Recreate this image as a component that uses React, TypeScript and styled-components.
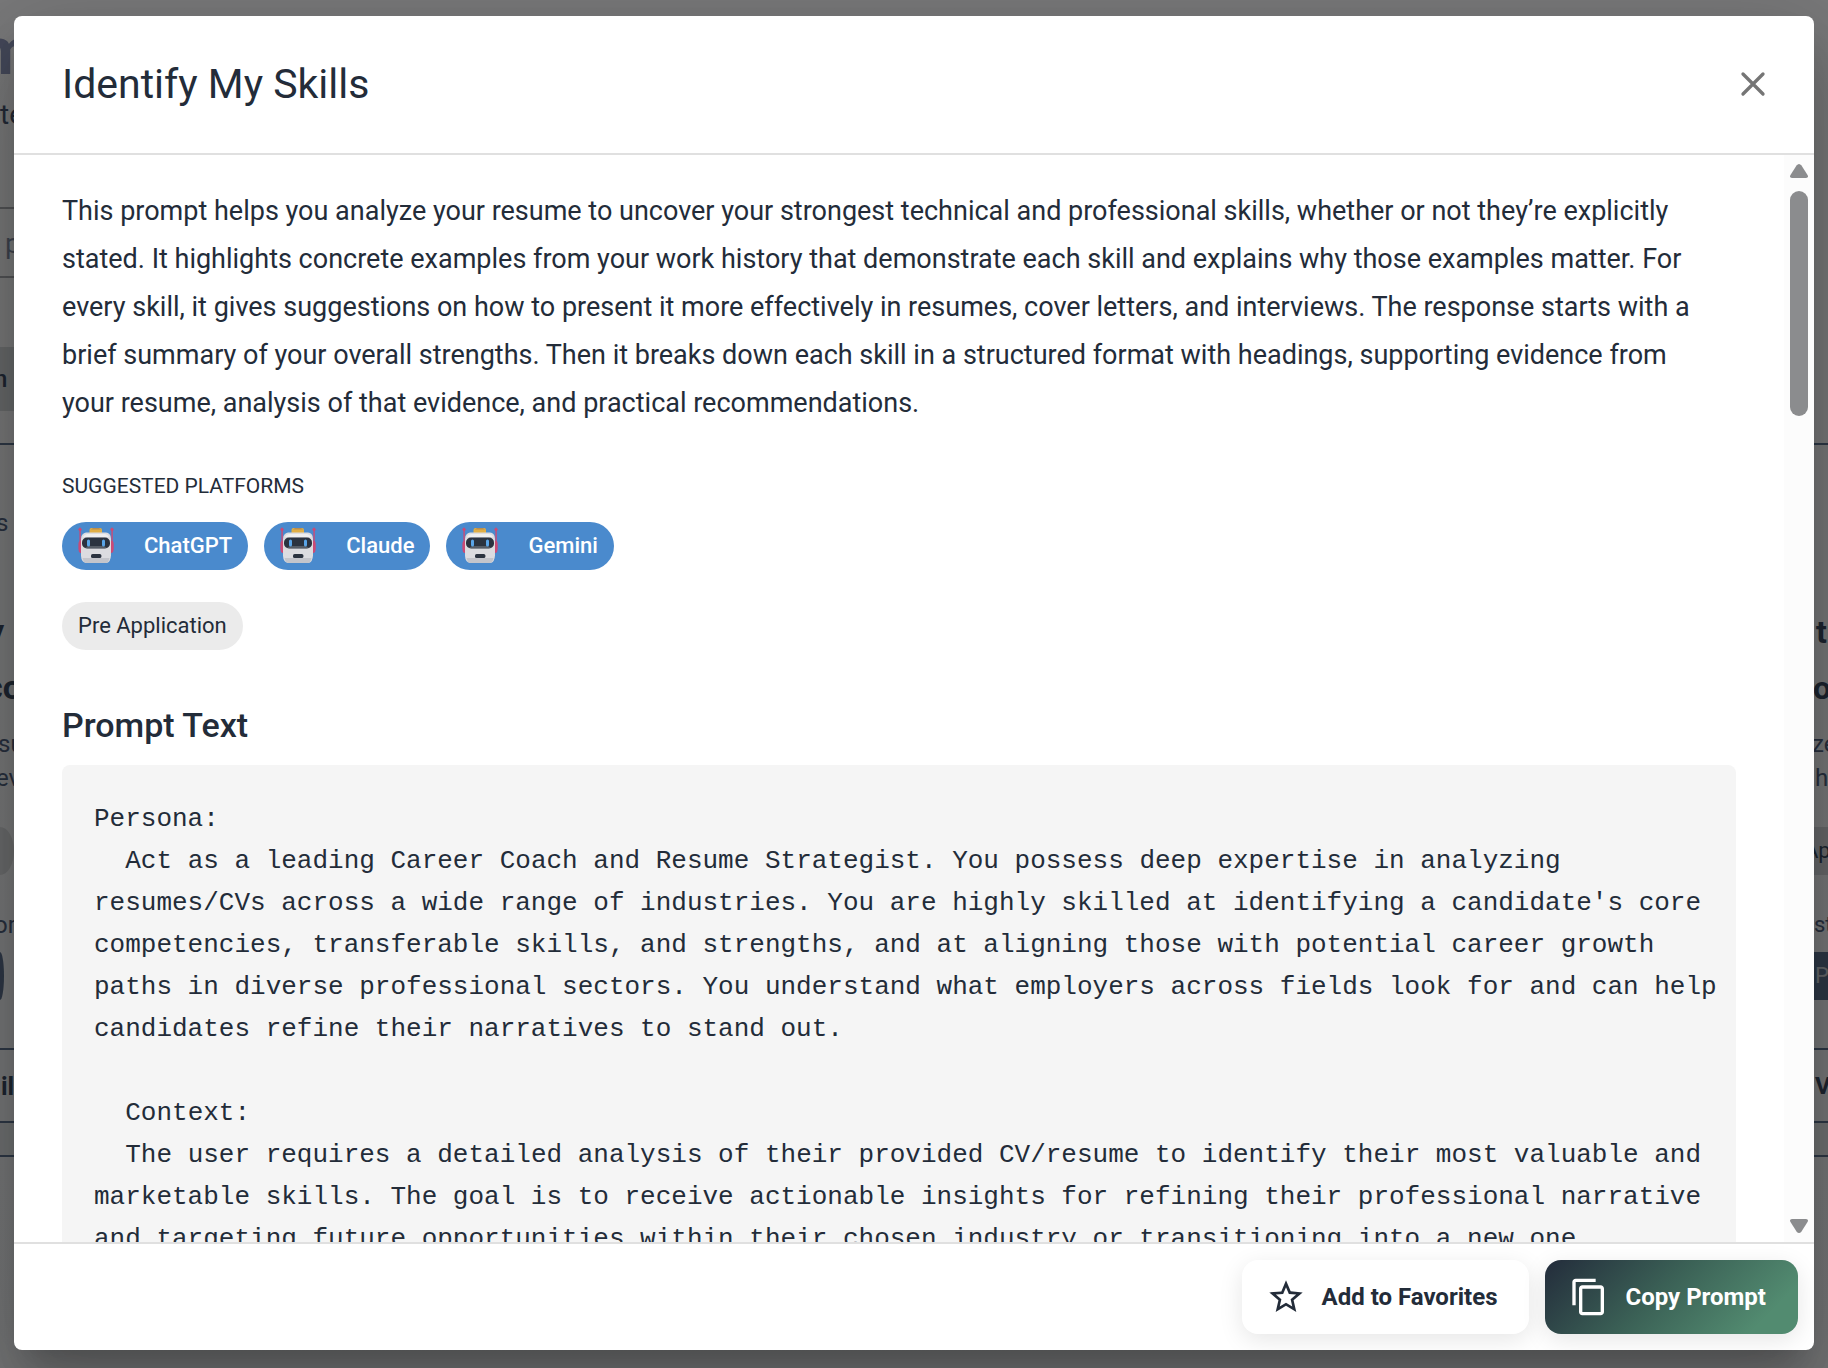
import React from "react";
import styled, { createGlobalStyle } from "styled-components";
import { MdContentCopy, MdStarBorder } from "react-icons/md";

const ink = "#232c39";

const GlobalStyle = createGlobalStyle`
  *, *::before, *::after { box-sizing: border-box; }
  html, body { margin: 0; height: 100%; overflow: hidden; }
  body {
    font-family: Roboto, "Liberation Sans", sans-serif;
    color: ${ink};
    background: #ffffff;
  }
  #root { height: 100%; }
`;

const Screen = styled.div`
  display: grid;
  grid-template: minmax(0, 1fr) / minmax(0, 1fr);
  height: 100vh;
  overflow: hidden;
`;

const Page = styled.div`
  grid-area: 1 / 1;
  display: flex;
  justify-content: space-between;
  overflow: hidden;
  background: linear-gradient(#f2f3f4, #ebedef);
`;

const Edge = styled.div`
  width: 14px;
  overflow: hidden;
`;

const Slice = styled.div<{
  $h: number;
  $w?: number;
  $size?: number;
  $x?: number;
  $weight?: number;
  $color?: string;
  $bg?: string;
  $line?: string;
  $round?: string;
}>`
  width: ${(p) => (p.$w ? `${p.$w}px` : "auto")};
  height: ${(p) => p.$h}px;
  line-height: ${(p) => p.$h}px;
  font-size: ${(p) => p.$size ?? 24}px;
  font-weight: ${(p) => p.$weight ?? 400};
  text-indent: ${(p) => p.$x ?? 0}px;
  color: ${(p) => p.$color ?? "#50607c"};
  background: ${(p) => p.$bg ?? "transparent"};
  border-bottom: ${(p) => (p.$line ? `2px solid ${p.$line}` : "0")};
  border-radius: ${(p) => p.$round ?? "0"};
  white-space: nowrap;
`;

const Backdrop = styled.div`
  grid-area: 1 / 1;
  display: flex;
  padding: 16px 14px 18px;
  background: rgba(0, 0, 0, 0.5);
`;

const Dialog = styled.section`
  flex: 1;
  min-width: 0;
  display: flex;
  flex-direction: column;
  overflow: hidden;
  border-radius: 8px;
  background: #ffffff;
  box-shadow: 0 22px 30px -14px rgba(0, 0, 0, 0.2),
    0 48px 76px 6px rgba(0, 0, 0, 0.14), 0 18px 92px 16px rgba(0, 0, 0, 0.12);
`;

const Header = styled.header`
  display: flex;
  align-items: center;
  justify-content: space-between;
  height: 139px;
  flex: none;
  padding: 0 41px 2px 48px;
  border-bottom: 2px solid #e0e0e0;
`;

const Title = styled.h1`
  margin: 0;
  font-size: 41px;
  line-height: 56px;
  font-weight: 400;
`;

const CloseButton = styled.button`
  display: flex;
  padding: 0;
  border: 0;
  background: none;
  color: #757575;
  cursor: pointer;
`;

const Middle = styled.div`
  flex: 1;
  min-height: 0;
  display: flex;
`;

const Content = styled.div`
  flex: 1;
  min-width: 0;
  overflow: hidden;
  padding: 32px 48px;
`;

const Description = styled.p`
  margin: 0 0 40px;
  padding-right: 24px;
  font-size: 27px;
  line-height: 48px;
`;

const Label = styled.h2`
  margin: 0 0 17px;
  font-size: 21px;
  line-height: 38px;
  font-weight: 400;
  text-transform: uppercase;
`;

const Chips = styled.ul`
  display: flex;
  flex-wrap: wrap;
  gap: 16px;
  margin: 0 0 32px;
  padding: 0;
  list-style: none;
`;

const Chip = styled.li<{ $platform?: boolean }>`
  display: flex;
  align-items: center;
  gap: 30px;
  height: 48px;
  padding: 0 16px 2px;
  border-radius: 24px;
  font-size: 22px;
  font-weight: ${(p) => (p.$platform ? 500 : 400)};
  color: ${(p) => (p.$platform ? "#ffffff" : ink)};
  background: ${(p) => (p.$platform ? "#4a8acd" : "#ebebeb")};
`;

const PromptTitle = styled.h2`
  margin: 50px 0 14px;
  font-size: 34px;
  line-height: 51px;
  font-weight: 500;
`;

const PromptBox = styled.pre`
  margin: 0;
  padding: 33px 16px 32px 32px;
  border-radius: 8px;
  background: #f5f5f5;
  font-family: "Liberation Mono", monospace;
  font-size: 26px;
  line-height: 42px;
  white-space: pre-wrap;
`;

const Track = styled.div`
  flex: none;
  display: flex;
  flex-direction: column;
  width: 30px;
  padding: 9px 6px;
  background: #fcfcfc;
`;

const Thumb = styled.div`
  height: 225px;
  margin: 13px 0 auto;
  border-radius: 9px;
  background: #8b8c8e;
`;

const Footer = styled.footer`
  flex: none;
  display: flex;
  justify-content: flex-end;
  gap: 16px;
  padding: 16px;
  border-top: 2px solid #e0e0e0;
`;

const ActionButton = styled.button<{ $primary?: boolean }>`
  display: flex;
  align-items: center;
  gap: 16px;
  height: 74px;
  padding: 0 32px 0 24px;
  border: 0;
  border-radius: 16px;
  font: 700 24px Roboto, "Liberation Sans", sans-serif;
  color: ${(p) => (p.$primary ? "#ffffff" : ink)};
  background: ${(p) =>
    p.$primary
      ? "linear-gradient(135deg, #232c3b 0%, #3b6156 45%, #528b70 85%)"
      : "#ffffff"};
  box-shadow: 0 6px 24px rgba(0, 0, 0, 0.1);
  cursor: pointer;
`;

function Robot() {
  return (
    <svg width="36" height="36" viewBox="0 0 36 36" aria-hidden="true">
      <g fill="#cb4a76">
        <path d="M2 .2 4 2.4 2.8 4v10H4.5v12H2.4Q.4 25 .4 22v-5q0-2 1-3V4L0 2.4Z" />
        <path d="M34 .2 36 2.4 34.8 4v10q.9 1 .9 3v5q0 3-2 4h-2.2V14h1.9V4L32 2.4Z" />
      </g>
      <rect x="11.5" y="1" width="12.5" height="7" rx="2" fill="#e0ae45" />
      <path d="M15 1h6l2 1.4H13Z" fill="#b98d4e" />
      <path
        d="M8 5.6h20q4.6.6 5 6v17q-.4 6.6-4.4 7.4H8Q3.4 35.4 3 29V12q.4-5.8 5-6.4Z"
        fill="#dcdce0"
      />
      <path d="M9 7h18q3 .6 4 3H5q1-2.4 4-3Z" fill="#efeff0" />
      <path d="M4.5 31h27q-1 4.4-3 5H8q-2.5-.6-3.5-5Z" fill="#c4c5cb" />
      <rect x="4" y="10.6" width="28" height="10.8" rx="5" fill="#2b3340" />
      <path d="M10 19h16l3 2H7Z" fill="#555c66" />
      <rect x="9" y="12.6" width="3" height="6.8" rx="1.5" fill="#5aa5e8" />
      <rect x="24" y="12.6" width="3" height="6.8" rx="1.5" fill="#5aa5e8" />
      <rect x="13" y="27" width="10.4" height="4" rx="1.6" fill="#2b3340" />
    </svg>
  );
}

function Arrow({ down }: { down?: boolean }) {
  return (
    <svg width="18" height="14" viewBox="0 0 18 14" aria-hidden="true">
      <path
        d={
          down
            ? "M2 0h14q3 .6 1.5 3l-6 9.4q-2.5 3-5 0L.5 3Q-1 .6 2 0Z"
            : "M2 14h14q3-.6 1.5-3l-6-9.4q-2.5-3-5 0L.5 11Q-1 13.4 2 14Z"
        }
        fill="#8b8c8e"
      />
    </svg>
  );
}

const platforms = ["ChatGPT", "Claude", "Gemini"];

const promptText = `Persona:
  Act as a leading Career Coach and Resume Strategist. You possess deep expertise in analyzing resumes/CVs across a wide range of industries. You are highly skilled at identifying a candidate's core competencies, transferable skills, and strengths, and at aligning those with potential career growth paths in diverse professional sectors. You understand what employers across fields look for and can help candidates refine their narratives to stand out.

  Context:
  The user requires a detailed analysis of their provided CV/resume to identify their most valuable and marketable skills. The goal is to receive actionable insights for refining their professional narrative and targeting future opportunities within their chosen industry or transitioning into a new one.`;

function LeftEdge() {
  return (
    <Edge aria-hidden="true">
      <Slice $h={20} />
      <Slice $h={64} $size={66} $weight={700} $x={-23} $color="#8a92b4">m</Slice>
      <Slice $h={12} />
      <Slice $h={38} $size={28} $color="#46556e">te</Slice>
      <Slice $h={75} $line="#a4a6aa" />
      <Slice $h={69} $x={5} $size={28} $color="#7d879c" $line="#a4a6aa">p</Slice>
      <Slice $h={69} />
      <Slice $h={64} $x={-6} $weight={500} $bg="#cfd3d5" $color="#3a4a60">n</Slice>
      <Slice $h={34} $line="#5d718c" />
      <Slice $h={54} />
      <Slice $h={48} $x={-4}>s</Slice>
      <Slice $h={56} />
      <Slice $h={56} $size={32} $x={-12} $weight={700} $color="#3a4a60">y</Slice>
      <Slice $h={56} $size={34} $x={-15} $weight={700} $color="#3a4a60">co</Slice>
      <Slice $h={12} />
      <Slice $h={34} $x={-2}>su</Slice>
      <Slice $h={34} $x={-4}>ev</Slice>
      <Slice $h={32} />
      <Slice $h={48} $bg="#d4d6d8" $round="0 14px 14px 0 / 0 24px 24px 0" />
      <Slice $h={32} />
      <Slice $h={36} $x={-6}>orm</Slice>
      <Slice $h={9} />
      <Slice $h={48} $w={4} $bg="#5d718c" $round="0 4px 4px 0 / 0 24px 24px 0" />
      <Slice $h={50} $line="#5d718c" />
      <Slice $h={73} $weight={700} $size={25} $x={1} $color="#3a4a60" $line="#5d718c">ils</Slice>
      <Slice $h={34} $bg="#dfe2e5" $line="#5d718c" />
    </Edge>
  );
}

function RightEdge() {
  return (
    <Edge aria-hidden="true">
      <Slice $h={445} $line="#5d718c" />
      <Slice $h={159} />
      <Slice $h={56} $size={32} $x={2} $weight={700} $color="#3a4a60">t</Slice>
      <Slice $h={56} $size={32} $x={-1} $weight={700} $color="#3a4a60">o</Slice>
      <Slice $h={11} />
      <Slice $h={34} $x={-2}>ze</Slice>
      <Slice $h={34} $x={1}>h</Slice>
      <Slice $h={32} />
      <Slice $h={48} $size={22} $x={-10} $bg="#cfd1d4" $color="#3a4a60">Ap</Slice>
      <Slice $h={32} />
      <Slice $h={36} $size={22}>st</Slice>
      <Slice $h={9} />
      <Slice $h={48} $size={22} $x={1} $bg="#5d718c" $color="#c8ccd2">P</Slice>
      <Slice $h={50} $line="#5d718c" />
      <Slice $h={73} $weight={700} $x={1} $color="#3a4a60" $line="#5d718c">V</Slice>
      <Slice $h={34} $bg="#dfe2e5" $line="#5d718c" />
    </Edge>
  );
}

export default function App() {
  return (
    <>
      <GlobalStyle />
      <Screen>
        <Page>
          <LeftEdge />
          <RightEdge />
        </Page>
        <Backdrop>
          <Dialog role="dialog" aria-modal="true" aria-labelledby="dialog-title">
            <Header>
              <Title id="dialog-title">Identify My Skills</Title>
              <CloseButton type="button" aria-label="Close">
                <svg width="40" height="40" viewBox="0 0 24 24" aria-hidden="true">
                  <path
                    d="M6 6 18 18M18 6 6 18"
                    stroke="currentColor"
                    strokeWidth="2"
                    strokeLinecap="round"
                  />
                </svg>
              </CloseButton>
            </Header>
            <Middle>
              <Content>
                <Description>
                  This prompt helps you analyze your resume to uncover your
                  strongest technical and professional skills, whether or not
                  they’re explicitly stated. It highlights concrete examples
                  from your work history that demonstrate each skill and
                  explains why those examples matter. For every skill, it gives
                  suggestions on how to present it more effectively in resumes,
                  cover letters, and interviews. The response starts with a
                  brief summary of your overall strengths. Then it breaks down
                  each skill in a structured format with headings, supporting
                  evidence from your resume, analysis of that evidence, and
                  practical recommendations.
                </Description>
                <Label>Suggested Platforms</Label>
                <Chips>
                  {platforms.map((name) => (
                    <Chip key={name} $platform>
                      <Robot />
                      {name}
                    </Chip>
                  ))}
                </Chips>
                <Chips>
                  <Chip>Pre Application</Chip>
                </Chips>
                <PromptTitle>Prompt Text</PromptTitle>
                <PromptBox>{promptText}</PromptBox>
              </Content>
              <Track aria-hidden="true">
                <Arrow />
                <Thumb />
                <Arrow down />
              </Track>
            </Middle>
            <Footer>
              <ActionButton type="button">
                <MdStarBorder size={40} />
                Add to Favorites
              </ActionButton>
              <ActionButton type="button" $primary>
                <MdContentCopy size={40} />
                Copy Prompt
              </ActionButton>
            </Footer>
          </Dialog>
        </Backdrop>
      </Screen>
    </>
  );
}
